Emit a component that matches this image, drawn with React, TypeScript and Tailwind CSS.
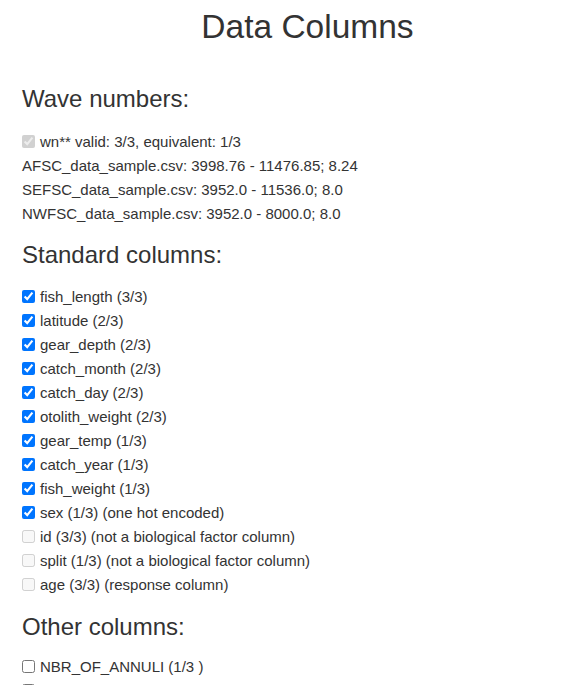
import React from "react";

const Row = ({
  label,
  checked,
  disabled,
}: {
  label: string;
  checked?: boolean;
  disabled?: boolean;
}) => (
  <div className="flex items-start h-[24px] leading-[24px]">
    <input
      type="checkbox"
      defaultChecked={checked}
      disabled={disabled}
      className="mt-[5px] mr-[5px] w-[13px] h-[13px] shrink-0"
    />
    <span>{label}</span>
  </div>
);

const standard: [string, boolean, boolean][] = [
  ["fish_length (3/3)", true, false],
  ["latitude (2/3)", true, false],
  ["gear_depth (2/3)", true, false],
  ["catch_month (2/3)", true, false],
  ["catch_day (2/3)", true, false],
  ["otolith_weight (2/3)", true, false],
  ["gear_temp (1/3)", true, false],
  ["catch_year (1/3)", true, false],
  ["fish_weight (1/3)", true, false],
  ["sex (1/3) (one hot encoded)", true, false],
  ["id (3/3) (not a biological factor column)", false, true],
  ["split (1/3) (not a biological factor column)", false, true],
  ["age (3/3) (response column)", false, true],
];

export default function App() {
  return (
    <div
      className="bg-white text-[#333333] text-[15px] min-h-[685px]"
      style={{ fontFamily: '"Liberation Sans", Arial, sans-serif' }}
    >
      <h1 className="text-[33.5px] leading-[39px] pt-[7px] pl-[34px] text-center font-normal">
        Data Columns
      </h1>
      <div className="pl-[22px]">
        <h3 className="text-[24px] leading-[26px] mt-[40px] font-normal">Wave numbers:</h3>
        <div className="mt-[18px]">
          <Row label="wn** valid: 3/3, equivalent: 1/3" checked disabled />
          <div className="leading-[24px]">AFSC_data_sample.csv: 3998.76 - 11476.85; 8.24</div>
          <div className="leading-[24px]">SEFSC_data_sample.csv: 3952.0 - 11536.0; 8.0</div>
          <div className="leading-[24px]">NWFSC_data_sample.csv: 3952.0 - 8000.0; 8.0</div>
        </div>
        <h3 className="text-[24px] leading-[26px] mt-[16px] font-normal">Standard columns:</h3>
        <div className="mt-[17px]">
          {standard.map(([l, c, d]) => (
            <Row key={l} label={l} checked={c} disabled={d} />
          ))}
        </div>
        <h3 className="text-[24px] leading-[26px] mt-[17px] font-normal">Other columns:</h3>
        <div className="mt-[15px]">
          <Row label="NBR_OF_ANNULI (1/3 )" />
          <Row label="station (1/3 )" />
        </div>
      </div>
    </div>
  );
}
